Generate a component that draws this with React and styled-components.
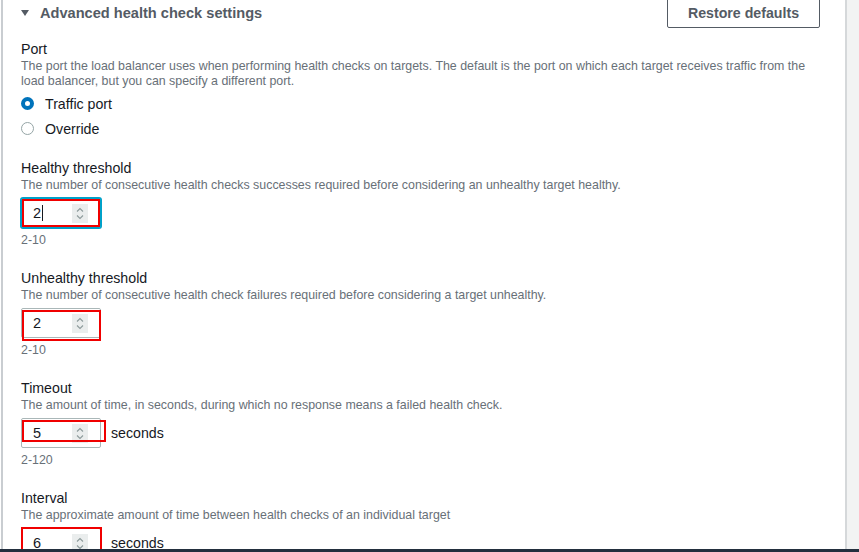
import styled, { createGlobalStyle } from "styled-components";

const GlobalStyle = createGlobalStyle`
  html, body {
    margin: 0;
    padding: 0;
    background: #ffffff;
  }
  body {
    font-family: "Liberation Sans", Arial, sans-serif;
    color: #16191f;
  }
`;

const Page = styled.div`
  display: flex;
  flex-direction: column;
  width: 859px;
  height: 552px;
  overflow: hidden;
`;

const Body = styled.div`
  flex: 1;
  display: flex;
  min-height: 0;
`;

const Main = styled.main`
  flex: 1;
  margin-left: 1px;
  border-left: 2px solid #c9cdd1;
  padding: 0 25px 0 18px;
  overflow: hidden;
`;

const Rail = styled.aside`
  width: 12px;
  border-left: 2px solid #d5d8da;
  background: #f2f3f3;
`;

const Footer = styled.footer`
  height: 3px;
  background: #232f3e;
`;

const Content = styled.div`
  display: flex;
  flex-direction: column;
  margin-top: -4px;
`;

const Header = styled.div`
  display: flex;
  align-items: center;
  justify-content: space-between;
  height: 32px;
`;

const Toggle = styled.div`
  display: flex;
  align-items: center;
  gap: 11px;
  color: #545b64;
  font-size: 14.6px;
  font-weight: 700;
  padding-top: 2px;
`;

const Caret = styled.span`
  width: 0;
  height: 0;
  border-left: 4.5px solid transparent;
  border-right: 4.5px solid transparent;
  border-top: 6.5px solid #545b64;
`;

const Button = styled.button`
  width: 153px;
  height: 32px;
  padding: 1px 0 0;
  background: #ffffff;
  border: 1px solid #545b64;
  border-radius: 2px;
  color: #545b64;
  font-family: inherit;
  font-size: 14.2px;
  font-weight: 700;
`;

const Field = styled.section`
  display: flex;
  flex-direction: column;
  margin-top: ${(p) => p.$gap}px;
`;

const Label = styled.div`
  font-size: 14.2px;
  line-height: 18px;
  color: #16191f;
`;

const Description = styled.div`
  margin-top: 1px;
  font-size: 12.4px;
  line-height: 15px;
  color: #687078;
`;

const Hint = styled.div`
  margin-top: 5px;
  font-size: 12.4px;
  line-height: 15px;
  color: #687078;
`;

const RadioGroup = styled.div`
  display: flex;
  flex-direction: column;
  margin-top: 2px;
`;

const RadioRow = styled.label`
  display: flex;
  align-items: center;
  gap: 11px;
  height: 25px;
  font-size: 14.2px;
  color: #16191f;
`;

const RadioDot = styled.span`
  box-sizing: border-box;
  width: 13px;
  height: 13px;
  border-radius: 50%;
  background: #ffffff;
  border: ${(p) => (p.$checked ? "4px solid #0073bb" : "1px solid #95a5a6")};
`;

const InputRow = styled.div`
  display: flex;
  align-items: center;
  gap: 10px;
  margin-top: 5px;
  font-size: 14.2px;
  color: #16191f;
`;

const InputWrap = styled.div`
  position: relative;
`;

const InputBox = styled.div`
  box-sizing: border-box;
  display: flex;
  align-items: center;
  justify-content: space-between;
  width: 80px;
  height: 30px;
  padding: 0 12px 0 11px;
  background: #ffffff;
  border: 1px solid ${(p) => (p.$focused ? "#00a1c9" : "#aab7b8")};
  box-shadow: ${(p) => (p.$focused ? "0 0 0 1px #00a1c9" : "none")};
  border-radius: 2px;
  font-size: 14.5px;
  color: #16191f;
`;

const Value = styled.span`
  display: flex;
  align-items: center;
`;

const TextCaret = styled.span`
  width: 1px;
  height: 16px;
  margin-left: 1px;
  background: #16191f;
`;

const Spinner = styled.span`
  display: flex;
  align-items: center;
  justify-content: center;
  width: 16px;
  height: 19px;
  margin-top: 1px;
  background: #eaeded;
`;

const Highlight = styled.span`
  position: absolute;
  box-sizing: border-box;
  left: ${(p) => p.$l}px;
  top: ${(p) => p.$t}px;
  width: ${(p) => p.$w}px;
  height: ${(p) => p.$h}px;
  border: 2px solid #f00000;
  pointer-events: none;
`;

const SpinIcon = () => (
  <svg width="10" height="15" viewBox="0 0 10 15" fill="none">
    <polyline points="2,5.5 5,2.5 8,5.5" stroke="#8d9a9b" strokeWidth="1.1" />
    <polyline points="2,9.5 5,12.5 8,9.5" stroke="#8d9a9b" strokeWidth="1.1" />
  </svg>
);

const NumberField = ({ value, focused, unit, mark }) => (
  <InputRow>
    <InputWrap>
      <InputBox $focused={focused}>
        <Value>
          {value}
          {focused && <TextCaret />}
        </Value>
        <Spinner>
          <SpinIcon />
        </Spinner>
      </InputBox>
      <Highlight $l={mark.l} $t={mark.t} $w={mark.w} $h={mark.h} />
    </InputWrap>
    {unit && <span>{unit}</span>}
  </InputRow>
);

const fields = [
  {
    label: "Healthy threshold",
    description:
      "The number of consecutive health checks successes required before considering an unhealthy target healthy.",
    value: "2",
    focused: true,
    hint: "2-10",
    mark: { l: 1, t: 1, w: 78, h: 28 },
  },
  {
    label: "Unhealthy threshold",
    description:
      "The number of consecutive health check failures required before considering a target unhealthy.",
    value: "2",
    hint: "2-10",
    mark: { l: 1, t: 2, w: 79, h: 31 },
  },
  {
    label: "Timeout",
    description:
      "The amount of time, in seconds, during which no response means a failed health check.",
    value: "5",
    unit: "seconds",
    hint: "2-120",
    mark: { l: 1, t: 2, w: 84, h: 22 },
  },
  {
    label: "Interval",
    description:
      "The approximate amount of time between health checks of an individual target",
    value: "6",
    unit: "seconds",
    mark: { l: 0, t: -1, w: 81, h: 31 },
  },
];

const App = () => {
  return (
    <>
      <GlobalStyle />
      <Page>
        <Body>
          <Main>
            <Content>
              <Header>
                <Toggle>
                  <Caret />
                  Advanced health check settings
                </Toggle>
                <Button>Restore defaults</Button>
              </Header>

              <Field $gap={12}>
                <Label>Port</Label>
                <Description>
                  The port the load balancer uses when performing health checks
                  on targets. The default is the port on which each target
                  receives traffic from the load balancer, but you can specify a
                  different port.
                </Description>
                <RadioGroup>
                  <RadioRow>
                    <RadioDot $checked />
                    Traffic port
                  </RadioRow>
                  <RadioRow>
                    <RadioDot />
                    Override
                  </RadioRow>
                </RadioGroup>
              </Field>

              {fields.map((f, i) => (
                <Field key={f.label} $gap={i === 0 ? 18 : 21}>
                  <Label>{f.label}</Label>
                  <Description>{f.description}</Description>
                  <NumberField
                    value={f.value}
                    focused={f.focused}
                    unit={f.unit}
                    mark={f.mark}
                  />
                  {f.hint && <Hint>{f.hint}</Hint>}
                </Field>
              ))}
            </Content>
          </Main>
          <Rail />
        </Body>
        <Footer />
      </Page>
    </>
  );
};

export default App;
